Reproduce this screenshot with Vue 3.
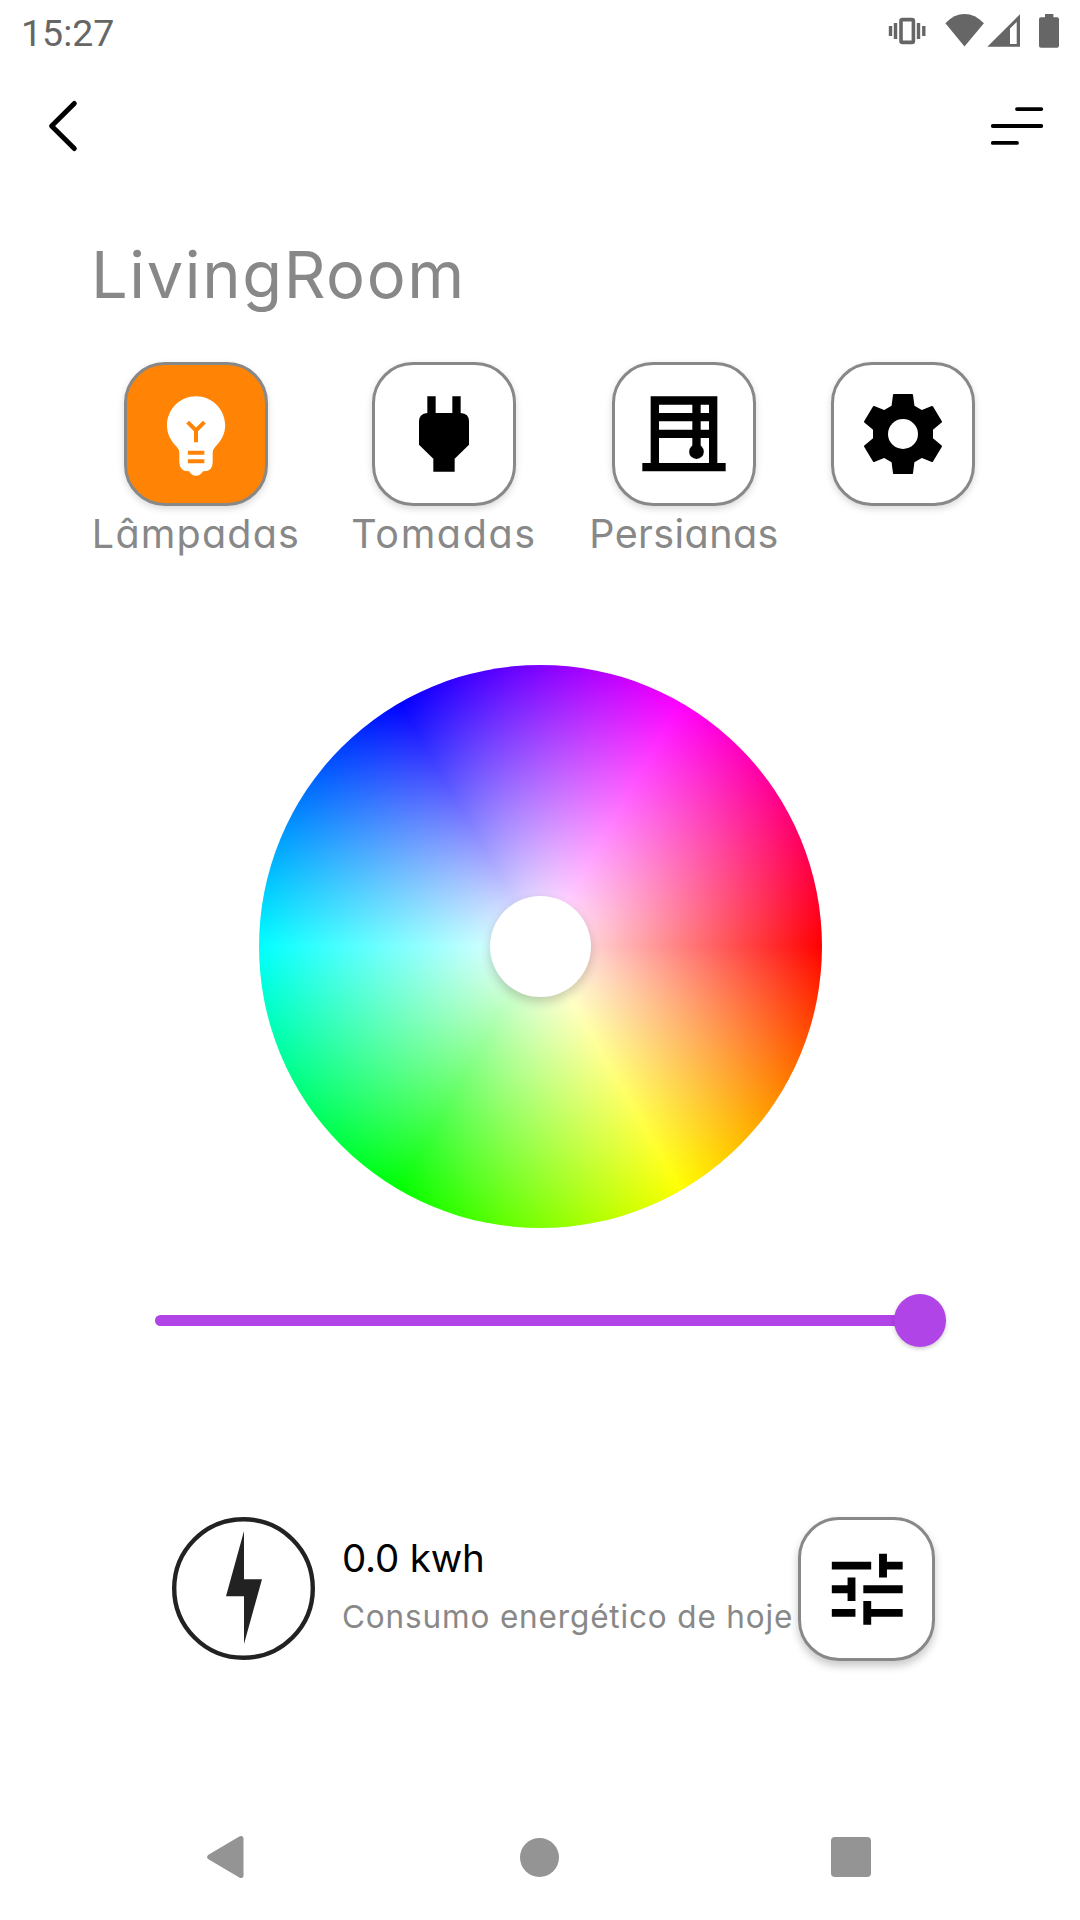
<script setup>
import { ref } from 'vue'

const active = ref('Lâmpadas')
const hours = '15:27'
const devices = [
  { label: 'Lâmpadas', icon: 'bulb', box: '141 45 414 414', width: 206, spacing: 1.2 },
  { label: 'Tomadas', icon: 'plug', box: '105 45 414 414', width: 184, spacing: 1.6 },
  { label: 'Persianas', icon: 'blinds', box: '135 45 414 414', width: 192, spacing: 0.4 },
  { label: '', icon: 'gear', box: '72 45 414 414', width: 144, spacing: 0 },
]
</script>

<template>
  <div class="screen">
    <header class="status">
      <span class="clock">{{ hours }}</span>
      <svg class="status-icons" width="180" height="60" viewBox="880 0 180 60">
        <g fill="#666">
          <rect x="901" y="19.6" width="12.4" height="22.8" rx="1.5" fill="none" stroke="#666" stroke-width="3.6" />
          <rect x="893.8" y="23" width="3.4" height="16" />
          <rect x="888.8" y="26" width="3.4" height="10" />
          <rect x="916.8" y="23" width="3.4" height="16" />
          <rect x="922.1" y="26" width="3.4" height="10" />
          <path d="M945.4 23.2Q954 14 964.5 14T983.9 23.2L964.5 46.6Z" />
          <path fill-rule="evenodd" d="M987.3 46.8L1020 14.3V46.8ZM1010 28.4V44H1016.7V22Z" />
          <path d="M1045 14h8.4v3.2h3.6q2 0 2 2v26.6q0 2-2 2h-16q-2 0-2-2V19.2q0-2 2-2h4Z" />
        </g>
      </svg>
    </header>

    <nav class="toolbar">
      <svg width="36" height="60" viewBox="45 96 36 60" fill="none" stroke="#000" stroke-width="5" stroke-linecap="round" stroke-linejoin="round">
        <path d="M74.3 103.500L51.6 126L74.3 148.500" />
      </svg>
      <svg width="60" height="60" viewBox="987 96 60 60" stroke="#000" stroke-width="3.8" stroke-linecap="round">
        <path d="M1017 109.100H1041.300M992.800 126H1041.300M992.800 142.900H1017" />
      </svg>
    </nav>

    <h1 class="title">LivingRoom</h1>

    <section class="devices">
      <div v-for="d in devices" :key="d.icon" class="device" :style="{ width: d.width + 'px' }">
        <button class="tile" :class="{ on: d.label === active }" @click="active = d.label">
          <svg width="138" height="138" :viewBox="d.box">
            <g v-if="d.icon === 'bulb'">
              <path fill="#fff" d="M348 138.500C300 138.500 261 177 261 226C261 254 273 273 290 290Q298 298 298 309V337Q298 364 325 364H327C333 373 340 377.500 348 377.500S363 373 369 364H372Q398 364 398 337V309Q398 298 406 290C423 273 435.500 254 435.500 226C435.500 177 396 138.500 348 138.500Z" />
              <path fill="none" stroke="#ff8406" stroke-width="12" d="M323 216.500L348 241L373 216.500M348 238V276.500M323.500 308.500H373M323.500 333.500H373" />
            </g>
            <path v-else-if="d.icon === 'plug'" d="M262 139H287V189H337V139H362V189Q387 190 387 214V284L344 326V365H280V326L237 284V214Q237 191 262 189Z" />
            <g v-else-if="d.icon === 'blinds'">
              <path fill-rule="evenodd" d="M242 139H442V339H467V364H217V339H242ZM267 164V189H367V164ZM392 164V189H417V164ZM267 214V239H367V214ZM392 214V239H417V214ZM267 264V339H417V264H392V300H367V264Z" />
              <circle cx="379.500" cy="305" r="22" />
            </g>
            <g v-else>
              <path stroke="#000" stroke-width="6" stroke-linejoin="round" d="M252 135H306L310.500 169L335 183.500L366.500 171L393 215L366 238V266L393 289L366.500 333L335 320.500L310.500 335L306 369H252L247.500 335L223 320.500L191.500 333L165 289L192 266V238L165 215L191.500 171L223 183.500L247.500 169Z" />
              <circle cx="279" cy="252" r="45" fill="#fff" />
            </g>
          </svg>
        </button>
        <span v-if="d.label" class="label" :style="{ letterSpacing: d.spacing + 'px' }">{{ d.label }}</span>
      </div>
    </section>

    <section class="wheel"><div class="knob"></div></section>

    <section class="slider">
      <div class="track"></div>
      <div class="thumb"></div>
    </section>

    <section class="energy">
      <svg width="144" height="144" viewBox="171 1517 144 144" fill="#222">
        <circle cx="243.5" cy="1588.500" r="69.300" fill="none" stroke="#222" stroke-width="4.400" />
        <path d="M244 1531V1579.300H262L244 1644V1596.300H226Z" />
      </svg>
      <div class="usage">
        <span class="amount">0.0 kwh</span>
        <span class="caption">Consumo energético de hoje</span>
      </div>
      <button class="tile tune">
        <svg width="94.5" height="94.5" viewBox="0 0 24 24">
          <path d="M3 17v2h6v-2H3zM3 5v2h10V5H3zm10 16v-2h8v-2h-8v-2h-2v6h2zM7 9v2H3v2h4v2h2V9H7zm14 4v-2H11v2h10zm-6-4h2V7h4V5h-4V3h-2v6z" />
        </svg>
      </button>
    </section>

    <footer class="system">
      <svg width="38" height="46" viewBox="206 1834 38 46" fill="#949494" stroke="#949494" stroke-width="5" stroke-linejoin="round">
        <path d="M209.700 1857L241 1838.500V1875.500Z" />
      </svg>
      <div class="home"></div>
      <div class="recent"></div>
    </footer>
  </div>
</template>

<style>
body {
  background: #fff;
}
</style>

<style scoped>
.screen {
  width: 1080px;
  height: 1920px;
  overflow: hidden;
  box-sizing: border-box;
  background: #fff;
  display: flex;
  flex-direction: column;
  font-family: Inter, "Open Sans", sans-serif;
  font-feature-settings: "cv11";
  color: #888;
}
.status {
  height: 66px;
  padding: 0 20px 0 21px;
  display: flex;
  justify-content: space-between;
  font-family: Roboto, sans-serif;
  font-size: 37.5px;
  color: #666;
}
.clock {
  line-height: 67px;
}
.toolbar {
  height: 120px;
  padding: 0 33px 0 45px;
  display: flex;
  align-items: center;
  justify-content: space-between;
}
.title {
  margin: 0;
  height: 176px;
  padding-left: 91px;
  font-size: 65px;
  font-weight: 400;
  line-height: 178px;
  letter-spacing: 1.6px;
  white-space: nowrap;
}
.devices {
  height: 303px;
  padding-left: 93px;
  display: grid;
  grid-template-columns: 259px 236px 243px 144px;
}
.device {
  display: flex;
  flex-direction: column;
  align-items: center;
}
.tile {
  width: 144px;
  height: 144px;
  flex: none;
  box-sizing: border-box;
  padding: 0;
  border: 3px solid #888;
  border-radius: 41px;
  background: #fff;
  display: flex;
  align-items: center;
  justify-content: center;
  box-shadow: 0 3px 7px rgba(0, 0, 0, 0.15);
}
.tile.on {
  background: #ff8406;
}
.label {
  margin-top: 3px;
  font-size: 39.5px;
  line-height: 50px;
  white-space: nowrap;
}
.wheel {
  width: 563px;
  height: 563px;
  margin-left: 259px;
  border-radius: 50%;
  background:
    radial-gradient(closest-side, #fff, rgba(255, 255, 255, 0)),
    conic-gradient(from 90deg, #f00, #ff0, #0f0, #0ff, #00f, #f0f, #f00);
  display: flex;
  align-items: center;
  justify-content: center;
}
.knob {
  width: 101px;
  height: 101px;
  border-radius: 50%;
  background: #fff;
  box-shadow: 0 5px 11px rgba(0, 0, 0, 0.2);
}
.slider {
  height: 53px;
  margin: 66px 134px 0 155px;
  display: flex;
  align-items: center;
}
.track {
  flex: 1;
  height: 11px;
  border-radius: 6px 0 0 6px;
  background: #b044e6;
}
.thumb {
  width: 52px;
  height: 53px;
  margin-left: -1px;
  border-radius: 50%;
  background: #b044e6;
  box-shadow: 0 2px 4px rgba(0, 0, 0, 0.2);
}
.energy {
  margin: 170px 145px 0 171px;
  height: 144px;
  display: flex;
}
.usage {
  width: 456px;
  padding: 16px 0 0 27px;
  display: flex;
  flex-direction: column;
  white-space: nowrap;
}
.amount {
  font-size: 38.5px;
  line-height: 50px;
  letter-spacing: -0.2px;
  color: #000;
}
.caption {
  margin-top: 12px;
  font-size: 31.5px;
  line-height: 44px;
  letter-spacing: 0.85px;
}
.tune {
  width: 137px;
  margin-left: auto;
  box-shadow: 0 5px 9px rgba(0, 0, 0, 0.22);
}
.tune svg {
  margin: 1px 0 0 1px;
}
.system {
  height: 46px;
  margin: 173px 209px 0 206px;
  display: flex;
  align-items: center;
  justify-content: space-between;
}
.home {
  width: 39px;
  height: 39px;
  margin-left: 4px;
  border-radius: 50%;
  background: #949494;
}
.recent {
  width: 40px;
  height: 40px;
  border-radius: 4px;
  background: #949494;
}
</style>
